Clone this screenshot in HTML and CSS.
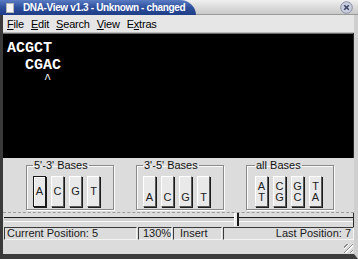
FILE: index.html
```html
<!DOCTYPE html>
<html>
<head>
<meta charset="utf-8">
<link rel="stylesheet" href="styles.css">
</head>
<body>
<div class="window">
  <div class="titlebar">
    <div class="title-tab">
      <span class="doc-icon"></span>
      <span class="title-text">DNA-View v1.3 - Unknown - changed</span>
    </div>
    <div class="title-rest">
      <span class="close-btn"><svg width="13" height="13" viewBox="0 0 13 13"><circle cx="6.5" cy="6.5" r="5.8" fill="#c9cede" stroke="#8a90a8" stroke-width="1"/><path d="M4.2 4.2 L8.8 8.8 M8.8 4.2 L4.2 8.8" stroke="#3c4666" stroke-width="1.6"/></svg></span>
    </div>
  </div>
  <div class="body">
    <div class="menubar">
      <span class="menu"><u>F</u>ile</span>
      <span class="menu"><u>E</u>dit</span>
      <span class="menu"><u>S</u>earch</span>
      <span class="menu"><u>V</u>iew</span>
      <span class="menu">E<u>x</u>tras</span>
    </div>
    <div class="editor">
      <div class="line">ACGCT</div>
      <div class="line">  CGAC</div>
      <div class="line caret">     ^</div>
    </div>
    <div class="panel">
      <fieldset class="group">
        <legend>5'-3' Bases</legend>
        <div class="btns">
          <span class="btn active mid">A</span>
          <span class="btn mid">C</span>
          <span class="btn mid">G</span>
          <span class="btn mid">T</span>
        </div>
      </fieldset>
      <fieldset class="group">
        <legend>3'-5' Bases</legend>
        <div class="btns">
          <span class="btn low">A</span>
          <span class="btn low">C</span>
          <span class="btn low">G</span>
          <span class="btn low">T</span>
        </div>
      </fieldset>
      <fieldset class="group all">
        <legend>all Bases</legend>
        <div class="btns">
          <span class="btn pair">A<br>T</span>
          <span class="btn pair">C<br>G</span>
          <span class="btn pair">G<br>C</span>
          <span class="btn pair">T<br>A</span>
        </div>
      </fieldset>
    </div>
    <div class="slider">
      <div class="groove left"></div>
      <div class="handle"></div>
      <div class="groove right"></div>
    </div>
    <div class="statusbar">
      <span class="field f1">Current Position: 5</span>
      <span class="field f2">130%</span>
      <span class="field f3">Insert</span>
      <span class="field f4">Last Position: 7</span>
    </div>
    <div class="bottom"><span class="grip"></span></div>
  </div>
</div>
</body>
</html>
```
FILE: styles.css
```css
* { box-sizing: border-box; }
html, body { margin: 0; padding: 0; }
body {
  width: 358px;
  height: 259px;
  background: #2c4f9a;
  font-family: "Liberation Sans", Arial, sans-serif;
  font-size: 11px;
  color: #000;
  overflow: hidden;
}
.window {
  width: 358px;
  height: 259px;
  display: flex;
  flex-direction: column;
  background: #dadada;
}
.titlebar {
  height: 15px;
  display: flex;
  background: linear-gradient(#f0f0f0, #c8c8c8);
  border-bottom: 1px solid #9a9a9a;
}
.title-tab {
  width: 196px;
  height: 15px;
  display: flex;
  align-items: center;
  background: linear-gradient(#5a7cc4, #2e4f9c 50%, #1f3d87);
  border-top-right-radius: 16px 15px;
  padding-left: 6px;
  white-space: nowrap;
}
.doc-icon {
  width: 8px;
  height: 10px;
  background: #f4f4f4;
  border: 1px solid #b8b8b8;
  margin-right: 9px;
  flex: none;
}
.title-text {
  color: #fff;
  font-weight: bold;
  font-size: 10px;
  letter-spacing: -0.35px;
  white-space: nowrap;
}
.title-rest {
  flex: 1;
  display: flex;
  justify-content: flex-end;
  align-items: center;
  padding-right: 5px;
}
.close-btn { display: flex; }
.body {
  flex: 1;
  display: flex;
  flex-direction: column;
  border-left: 3px solid #3a3a3a;
  border-right: 4px solid #cfcfcf;
  border-bottom: 5px solid #3c3c3c;
  box-shadow: inset -1px 0 0 #2a2a2a;
  background: #dcdcdc;
}
.menubar {
  height: 18px;
  display: flex;
  align-items: center;
  gap: 7px;
  padding-left: 4px;
  background: #e6e6e6;
  border-bottom: 1px solid #bcbcbc;
  font-size: 11px;
  letter-spacing: -0.2px;
}
.menu { padding: 0; }
.menu u { text-decoration: underline; text-underline-offset: 1px; }
.editor {
  height: 125px;
  background: #000;
  border-top: 1px solid #6a6a6a;
  margin-right: 1px;
  padding: 6px 0 0 4px;
  color: #fff;
  font-family: "Liberation Mono", "Courier New", monospace;
  font-weight: bold;
  font-size: 15px;
  line-height: 17px;
}
.line { height: 17px; white-space: pre; }
.caret {
  font-size: 12px;
  line-height: 12px;
  height: 12px;
  font-weight: normal;
  padding-left: 1px;
}
.panel {
  height: 55px;
  display: flex;
  gap: 22px;
  padding: 2px 0 0 23px;
  background: #dcdcdc;
  border-bottom: 1px dashed #9c9c9c;
}
.group {
  margin: 0;
  width: 88px;
  height: 50px;
  border: 1px solid #8a8a8a;
  box-shadow: 1px 1px 0 #fafafa, inset 1px 1px 0 #fafafa;
  padding: 0 0 0 6px;
  min-width: 0;
}
.group.all { padding-left: 8px; }
.group legend {
  padding: 0 1px;
  margin-left: 0;
  font-size: 11px;
  line-height: 11px;
  color: #111;
}
.btns {
  display: flex;
  gap: 5px;
  padding-top: 5px;
}
.btn {
  width: 13px;
  height: 31px;
  background: #e9e9e9;
  border-top: 1px solid #fff;
  border-left: 1px solid #fff;
  border-right: 1px solid #5a5a5a;
  border-bottom: 1px solid #5a5a5a;
  box-shadow: 1px 1px 0 #1c1c1c;
  display: flex;
  justify-content: center;
  font-size: 11px;
  line-height: 11px;
  color: #222;
}
.btn.mid { align-items: center; }
.btn.low { align-items: flex-end; padding-bottom: 3px; }
.btn.pair { align-items: center; text-align: center; }
.btn.active {
  border: 1px solid #1a1a1a;
  box-shadow: inset 1px 1px 0 #fff, 1px 1px 0 #1c1c1c;
}
.slider {
  height: 13px;
  display: flex;
  align-items: center;
  padding: 0 1px;
}
.groove {
  height: 5px;
  border-top: 1px solid #1e1e1e;
  border-bottom: 1px solid #f8f8f8;
  background: #d0d0d0;
}
.groove.left { width: 230px; }
.groove.right { flex: 1; }
.handle {
  width: 5px;
  height: 13px;
  background: #ececec;
  border-left: 1px solid #fff;
  border-right: 2px solid #1a1a1a;
}
.statusbar {
  height: 13px;
  display: flex;
  gap: 1px;
  padding-left: 1px;
  margin-top: 1px;
}
.field {
  height: 13px;
  line-height: 11px;
  border-top: 1px solid #3a3a3a;
  border-left: 1px solid #3a3a3a;
  border-bottom: 1px solid #f4f4f4;
  border-right: 1px solid #f4f4f4;
  padding: 0 2px;
  white-space: nowrap;
  font-size: 11px;
  color: #1a1a1a;
}
.f1 { width: 133px; }
.f2 { width: 34px; padding-left: 4px; }
.f3 { width: 49px; padding-left: 6px; }
.f4 { flex: 1; text-align: right; }
.bottom {
  flex: 1;
  position: relative;
  background: #dcdcdc;
}
.grip {
  position: absolute;
  right: 1px;
  bottom: 1px;
  width: 9px;
  height: 9px;
  background: repeating-linear-gradient(135deg, transparent 0 2px, #8a8a8a 2px 3px, #fff 3px 4px);
}
```
